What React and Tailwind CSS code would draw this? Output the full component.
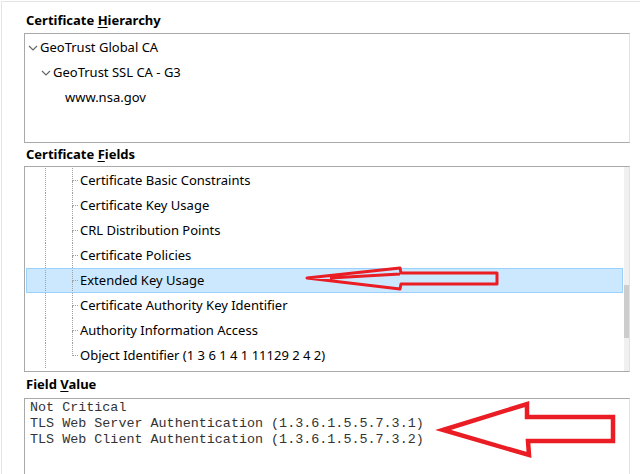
const ui = { fontFamily: '"Noto Sans", "Open Sans", sans-serif' };
const mono = { fontFamily: '"Liberation Mono", "Courier New", monospace' };

const fields = [
  "Certificate Basic Constraints",
  "Certificate Key Usage",
  "CRL Distribution Points",
  "Certificate Policies",
  "Extended Key Usage",
  "Certificate Authority Key Identifier",
  "Authority Information Access",
  "Object Identifier (1 3 6 1 4 1 11129 2 4 2)",
];

function Chevron() {
  return (
    <svg width="10" height="6" viewBox="0 0 10 6" className="shrink-0">
      <polyline points="1,1 5,5 9,1" fill="none" stroke="#666" strokeWidth="1.2" />
    </svg>
  );
}

function Label({ pre, ch, post, className }) {
  return (
    <div className={"font-bold text-[13px] text-black whitespace-pre pl-[2px] " + className}>
      {pre}
      <span className="underline underline-offset-2">{ch}</span>
      {post}
    </div>
  );
}

function FieldRow({ text, selected, last }) {
  return (
    <div
      className={
        "flex h-[25px] items-stretch " +
        (selected ? "bg-[#cce8ff] outline outline-1 -outline-offset-1 outline-[#99d1ff]" : "")
      }
    >
      <div className="w-[19px]" />
      <div className="w-[27px] border-l border-dotted border-[#a0a0a0]" />
      <div className="w-[8px] flex flex-col">
        <div className="h-[13px] border-l border-b border-dotted border-[#a0a0a0] w-[6px]" />
        <div className={"flex-1 " + (last ? "" : "border-l border-dotted border-[#a0a0a0]")} />
      </div>
      <span className="text-[13px] text-black leading-[25px] whitespace-nowrap">{text}</span>
    </div>
  );
}

export default function App() {
  return (
    <div className="w-[640px] h-[474px] overflow-hidden bg-white relative pt-px pl-px" style={ui}>
      <div className="h-full border-t border-l border-[#e4e4e4] pl-[22px]">
        <Label className="pt-[8px] h-[31px] leading-[21px]" pre="Certificate " ch="H" post="ierarchy" />

        <div className="w-[606px] h-[110px] border border-[#a9a9a9] border-r-[#e2e2e2] pt-px">
          <div className="flex items-center h-[25px] pl-[3px] gap-[2px]">
            <Chevron />
            <span className="text-[13px] text-black">GeoTrust Global CA</span>
          </div>
          <div className="flex items-center h-[25px] pl-[16px] gap-[2px]">
            <Chevron />
            <span className="text-[13px] text-black">GeoTrust SSL CA - G3</span>
          </div>
          <div className="flex items-center h-[25px] pl-[40px]">
            <span className="text-[13px] text-black">www.nsa.gov</span>
          </div>
        </div>

        <Label className="h-[23px] leading-[23px]" pre="Certificate " ch="F" post="ields" />

        <div className="w-[606px] h-[206px] border border-[#a9a9a9] border-r-[#e2e2e2] flex">
          <div className="flex-1 px-px pt-px">
            {fields.map((f, i) => (
              <FieldRow key={f} text={f} selected={i === 4} last={i === fields.length - 1} />
            ))}
          </div>
          <div className="w-[5px] bg-[#f0f0f0] flex flex-col">
            <div className="h-[118px]" />
            <div className="h-[53px] bg-[#cdcdcd]" />
          </div>
        </div>

        <Label className="h-[26px] leading-[25px]" pre="Field " ch="V" post="alue" />

        <div className="w-[606px] h-[100px] border border-[#a9a9a9] border-r-[#e2e2e2] pl-[5px] pt-px">
          <pre className="text-[13.4px] leading-[16px] text-[#333]" style={mono}>
            {"Not Critical\nTLS Web Server Authentication (1.3.6.1.5.5.7.3.1)\nTLS Web Client Authentication (1.3.6.1.5.5.7.3.2)"}
          </pre>
        </div>
      </div>

      <svg className="absolute inset-0 pointer-events-none" width="640" height="474" viewBox="0 0 640 474">
        <path
          d="M307,278 L400,268 L401,273 L497,273 L497,284 L401,284 L400,289 Z M330,278 L400,274"
          fill="none"
          stroke="#ea1c24"
          strokeWidth="3"
          strokeLinejoin="round"
        />
        <path
          d="M443,430 L527,404 L527,417 L613,417 L613,441 L528,441 L529,455 Z"
          fill="none"
          stroke="#ea1c24"
          strokeWidth="4.5"
          strokeLinejoin="miter"
        />
      </svg>
    </div>
  );
}
